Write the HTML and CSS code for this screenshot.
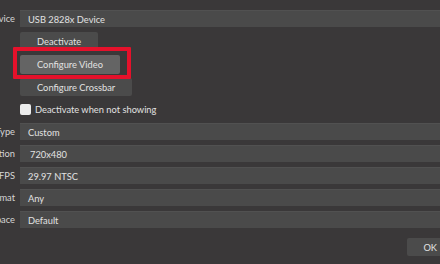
FILE: index.html
```html
<!DOCTYPE html>
<html lang="en">
<head>
  <meta charset="UTF-8">
  <meta name="viewport" content="width=device-width, initial-scale=1.0">
  <title>Video Capture Device Properties</title>
  <link rel="stylesheet" href="styles.css">
</head>
<body>
  <div class="props">
    <div class="label">Device</div>
    <div class="field">USB 2828x Device</div>

    <div></div>
    <div class="btn-row"><button class="btn">Deactivate</button></div>

    <div></div>
    <div class="btn-row">
      <span class="marked"><button class="btn btn-active">Configure Video</button></span>
    </div>

    <div></div>
    <div class="btn-row"><button class="btn">Configure Crossbar</button></div>

    <div></div>
    <label class="check"><span class="box"></span>Deactivate when not showing</label>

    <div class="label">Resolution/FPS Type</div>
    <div class="field">Custom</div>

    <div class="label">Resolution</div>
    <div class="field field-edit">720x480</div>

    <div class="label">FPS</div>
    <div class="field">29.97 NTSC</div>

    <div class="label">Video Format</div>
    <div class="field">Any</div>

    <div class="label">Color Space</div>
    <div class="field">Default</div>
  </div>

  <div class="footer">
    <button class="btn btn-ok">OK</button>
  </div>
</body>
</html>
```

FILE: styles.css
```css
* {
  margin: 0;
  padding: 0;
  box-sizing: border-box;
}

body {
  font-family: 'Lato', 'Noto Sans', sans-serif;
  font-size: 9.3px;
  background-color: #3a3839;
  color: #e2e2e2;
  width: 440px;
  height: 264px;
  overflow: hidden;
}

.props {
  display: grid;
  grid-template-columns: 15px 1fr;
  column-gap: 5px;
  row-gap: 5px;
  padding-top: 10px;
}

/* labels are cut by the left edge, so they overflow to the left */
.label {
  display: flex;
  justify-content: flex-end;
  align-items: center;
  white-space: nowrap;
  color: #d6d6d6;
}

.field {
  height: 17px;
  background-color: #4a4a4a;
  border-top: 1px solid #515151;
  padding-left: 8px;
  display: flex;
  align-items: center;
  white-space: nowrap;
}

.field-edit {
  padding-left: 10px;
}

.btn-row {
  display: flex;
  height: 18px;
}

.btn {
  font-family: inherit;
  font-size: inherit;
  color: #e2e2e2;
  background-color: #4b4b4b;
  border: none;
  border-radius: 2px;
  padding: 0 17px;
  height: 18px;
  white-space: nowrap;
}

.btn-active {
  background-color: #646464;
  height: 19px;
}

/* red annotation around Configure Video */
.marked {
  position: relative;
  display: flex;
}

.marked::after {
  content: "";
  position: absolute;
  left: -7px;
  right: -11px;
  top: -8px;
  bottom: -6px;
  border: 4px solid #e5112b;
  border-radius: 1px;
}

.check {
  display: flex;
  align-items: center;
  gap: 4px;
  height: 17px;
  white-space: nowrap;
}

.box {
  width: 11px;
  height: 11px;
  background-color: #ececec;
  border-radius: 2px;
}

.footer {
  display: flex;
  justify-content: flex-end;
  margin-top: 10px;
  margin-right: -13px;
}

.btn-ok {
  height: 18px;
  padding: 0 16px;
  background-color: #4b4b4b;
}
```
